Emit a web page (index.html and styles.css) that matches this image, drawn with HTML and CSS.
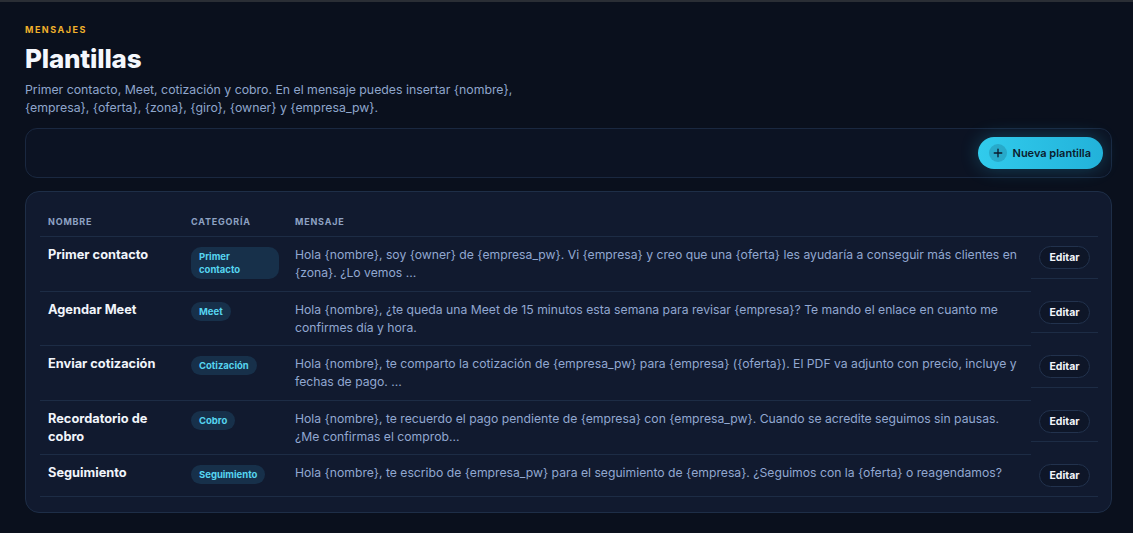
FILE: index.html
```html
<!DOCTYPE html>
<html lang="es">
<head>
<meta charset="utf-8">
<title>Plantillas</title>
<link rel="stylesheet" href="styles.css">
</head>
<body>
<main class="page">
  <header class="page-head">
    <div class="eyebrow">MENSAJES</div>
    <h1 class="title">Plantillas</h1>
    <p class="lead">Primer contacto, Meet, cotización y cobro. En el mensaje puedes insertar {nombre}, {empresa}, {oferta}, {zona}, {giro}, {owner} y {empresa_pw}.</p>
  </header>

  <section class="toolbar">
    <button class="btn-primary" type="button">
      <span class="btn-icon"><svg viewBox="0 0 12 12" width="10" height="10"><path d="M6 1.5v9M1.5 6h9" stroke="currentColor" stroke-width="1.6" stroke-linecap="round"/></svg></span>
      Nueva plantilla
    </button>
  </section>

  <section class="card">
    <table class="tpl-table">
      <thead>
        <tr>
          <th class="col-name">NOMBRE</th>
          <th class="col-cat">CATEGORÍA</th>
          <th class="col-msg">MENSAJE</th>
          <th class="col-act"></th>
        </tr>
      </thead>
      <tbody>
        <tr>
          <td class="name">Primer contacto</td>
          <td><span class="badge">Primer contacto</span></td>
          <td class="msg">Hola {nombre}, soy {owner} de {empresa_pw}. Vi {empresa} y creo que una {oferta} les ayudaría a conseguir más clientes en {zona}. ¿Lo vemos …</td>
          <td class="act"><button class="btn-edit" type="button">Editar</button></td>
        </tr>
        <tr>
          <td class="name">Agendar Meet</td>
          <td><span class="badge">Meet</span></td>
          <td class="msg">Hola {nombre}, ¿te queda una Meet de 15 minutos esta semana para revisar {empresa}? Te mando el enlace en cuanto me confirmes día y hora.</td>
          <td class="act"><button class="btn-edit" type="button">Editar</button></td>
        </tr>
        <tr>
          <td class="name">Enviar cotización</td>
          <td><span class="badge">Cotización</span></td>
          <td class="msg">Hola {nombre}, te comparto la cotización de {empresa_pw} para {empresa} ({oferta}). El PDF va adjunto con precio, incluye y fechas de pago. …</td>
          <td class="act"><button class="btn-edit" type="button">Editar</button></td>
        </tr>
        <tr>
          <td class="name">Recordatorio de cobro</td>
          <td><span class="badge">Cobro</span></td>
          <td class="msg">Hola {nombre}, te recuerdo el pago pendiente de {empresa} con {empresa_pw}. Cuando se acredite seguimos sin pausas. ¿Me confirmas el comprob…</td>
          <td class="act"><button class="btn-edit" type="button">Editar</button></td>
        </tr>
        <tr>
          <td class="name">Seguimiento</td>
          <td><span class="badge">Seguimiento</span></td>
          <td class="msg">Hola {nombre}, te escribo de {empresa_pw} para el seguimiento de {empresa}. ¿Seguimos con la {oferta} o reagendamos?</td>
          <td class="act"><button class="btn-edit" type="button">Editar</button></td>
        </tr>
      </tbody>
    </table>
  </section>
</main>
</body>
</html>
```

FILE: styles.css
```css
* { box-sizing: border-box; }

html, body {
  margin: 0;
  height: 100%;
}

body {
  background: #0a101d;
  border-top: 2px solid #2a2e35;
  font-family: Inter, "Noto Sans", "DejaVu Sans", sans-serif;
  color: #e8eef8;
  overflow: hidden;
}

.page {
  padding: 22px 21px 0 25px;
}

.eyebrow {
  font-size: 9px;
  font-weight: 700;
  letter-spacing: 1.5px;
  color: #f0b12c;
  line-height: 12px;
}

.title {
  margin: 6px 0 0;
  font-size: 26px;
  font-weight: 800;
  line-height: 34px;
  color: #f4f7fc;
  letter-spacing: -0.2px;
}

.lead {
  margin: 5px 0 0;
  max-width: 510px;
  font-size: 12.3px;
  line-height: 18px;
  color: #8fa6cc;
}

.toolbar {
  margin-top: 11px;
  display: flex;
  justify-content: flex-end;
  padding: 8px;
  border: 1px solid #1a2840;
  border-radius: 12px;
  background: #0c1323;
}

.btn-primary {
  display: flex;
  align-items: center;
  gap: 6px;
  height: 32px;
  padding: 0 12px 0 11px;
  border: 0;
  border-radius: 16px;
  background: linear-gradient(90deg, #31cbec, #22b2da);
  color: #0b1b2d;
  font-family: inherit;
  font-size: 11px;
  font-weight: 600;
  box-shadow: 0 0 18px rgba(40, 190, 230, 0.28);
}

.btn-icon {
  display: flex;
  align-items: center;
  justify-content: center;
  width: 18px;
  height: 18px;
  border-radius: 50%;
  background: rgba(10, 40, 60, 0.18);
  color: #0b1b2d;
}

.card {
  margin-top: 13px;
  padding: 15px 13px 15px 14px;
  border: 1px solid #1e2e47;
  border-radius: 14px;
  background: #111a2f;
}

.tpl-table {
  width: 100%;
  border-collapse: separate;
  border-spacing: 0;
}

.tpl-table th {
  text-align: left;
  font-size: 9px;
  font-weight: 700;
  letter-spacing: 0.8px;
  color: #8ea2c3;
  padding: 9px 8px 9px;
  border-bottom: 1px solid #1d2c45;
  line-height: 11px;
}

.col-name { width: 143px; }
.col-cat { width: 104px; }
.col-act { width: 67px; }

.tpl-table td {
  padding: 9px 8px 8.6px;
  border-bottom: 1px solid #1d2c45;
  vertical-align: top;
  font-size: 12.2px;
  line-height: 18px;
}

.tpl-table td.name {
  font-weight: 700;
  color: #f1f5fb;
  font-size: 12.8px;
}

.tpl-table td.msg {
  color: #91a8d1;
}

.badge {
  display: inline-block;
  margin-top: 1px;
  padding: 3px 8px;
  border-radius: 10px;
  background: #17304a;
  color: #56d5f0;
  font-size: 9.5px;
  font-weight: 700;
  line-height: 13px;
}

.tpl-table td.act {
  display: flex;
  justify-content: flex-end;
}

.btn-edit {
  height: 23px;
  width: 51px;
  padding: 0;
  border: 1px solid #22324d;
  border-radius: 12px;
  background: #0e1628;
  color: #f2f5fa;
  font-family: inherit;
  font-size: 10.5px;
  font-weight: 700;
}
```
